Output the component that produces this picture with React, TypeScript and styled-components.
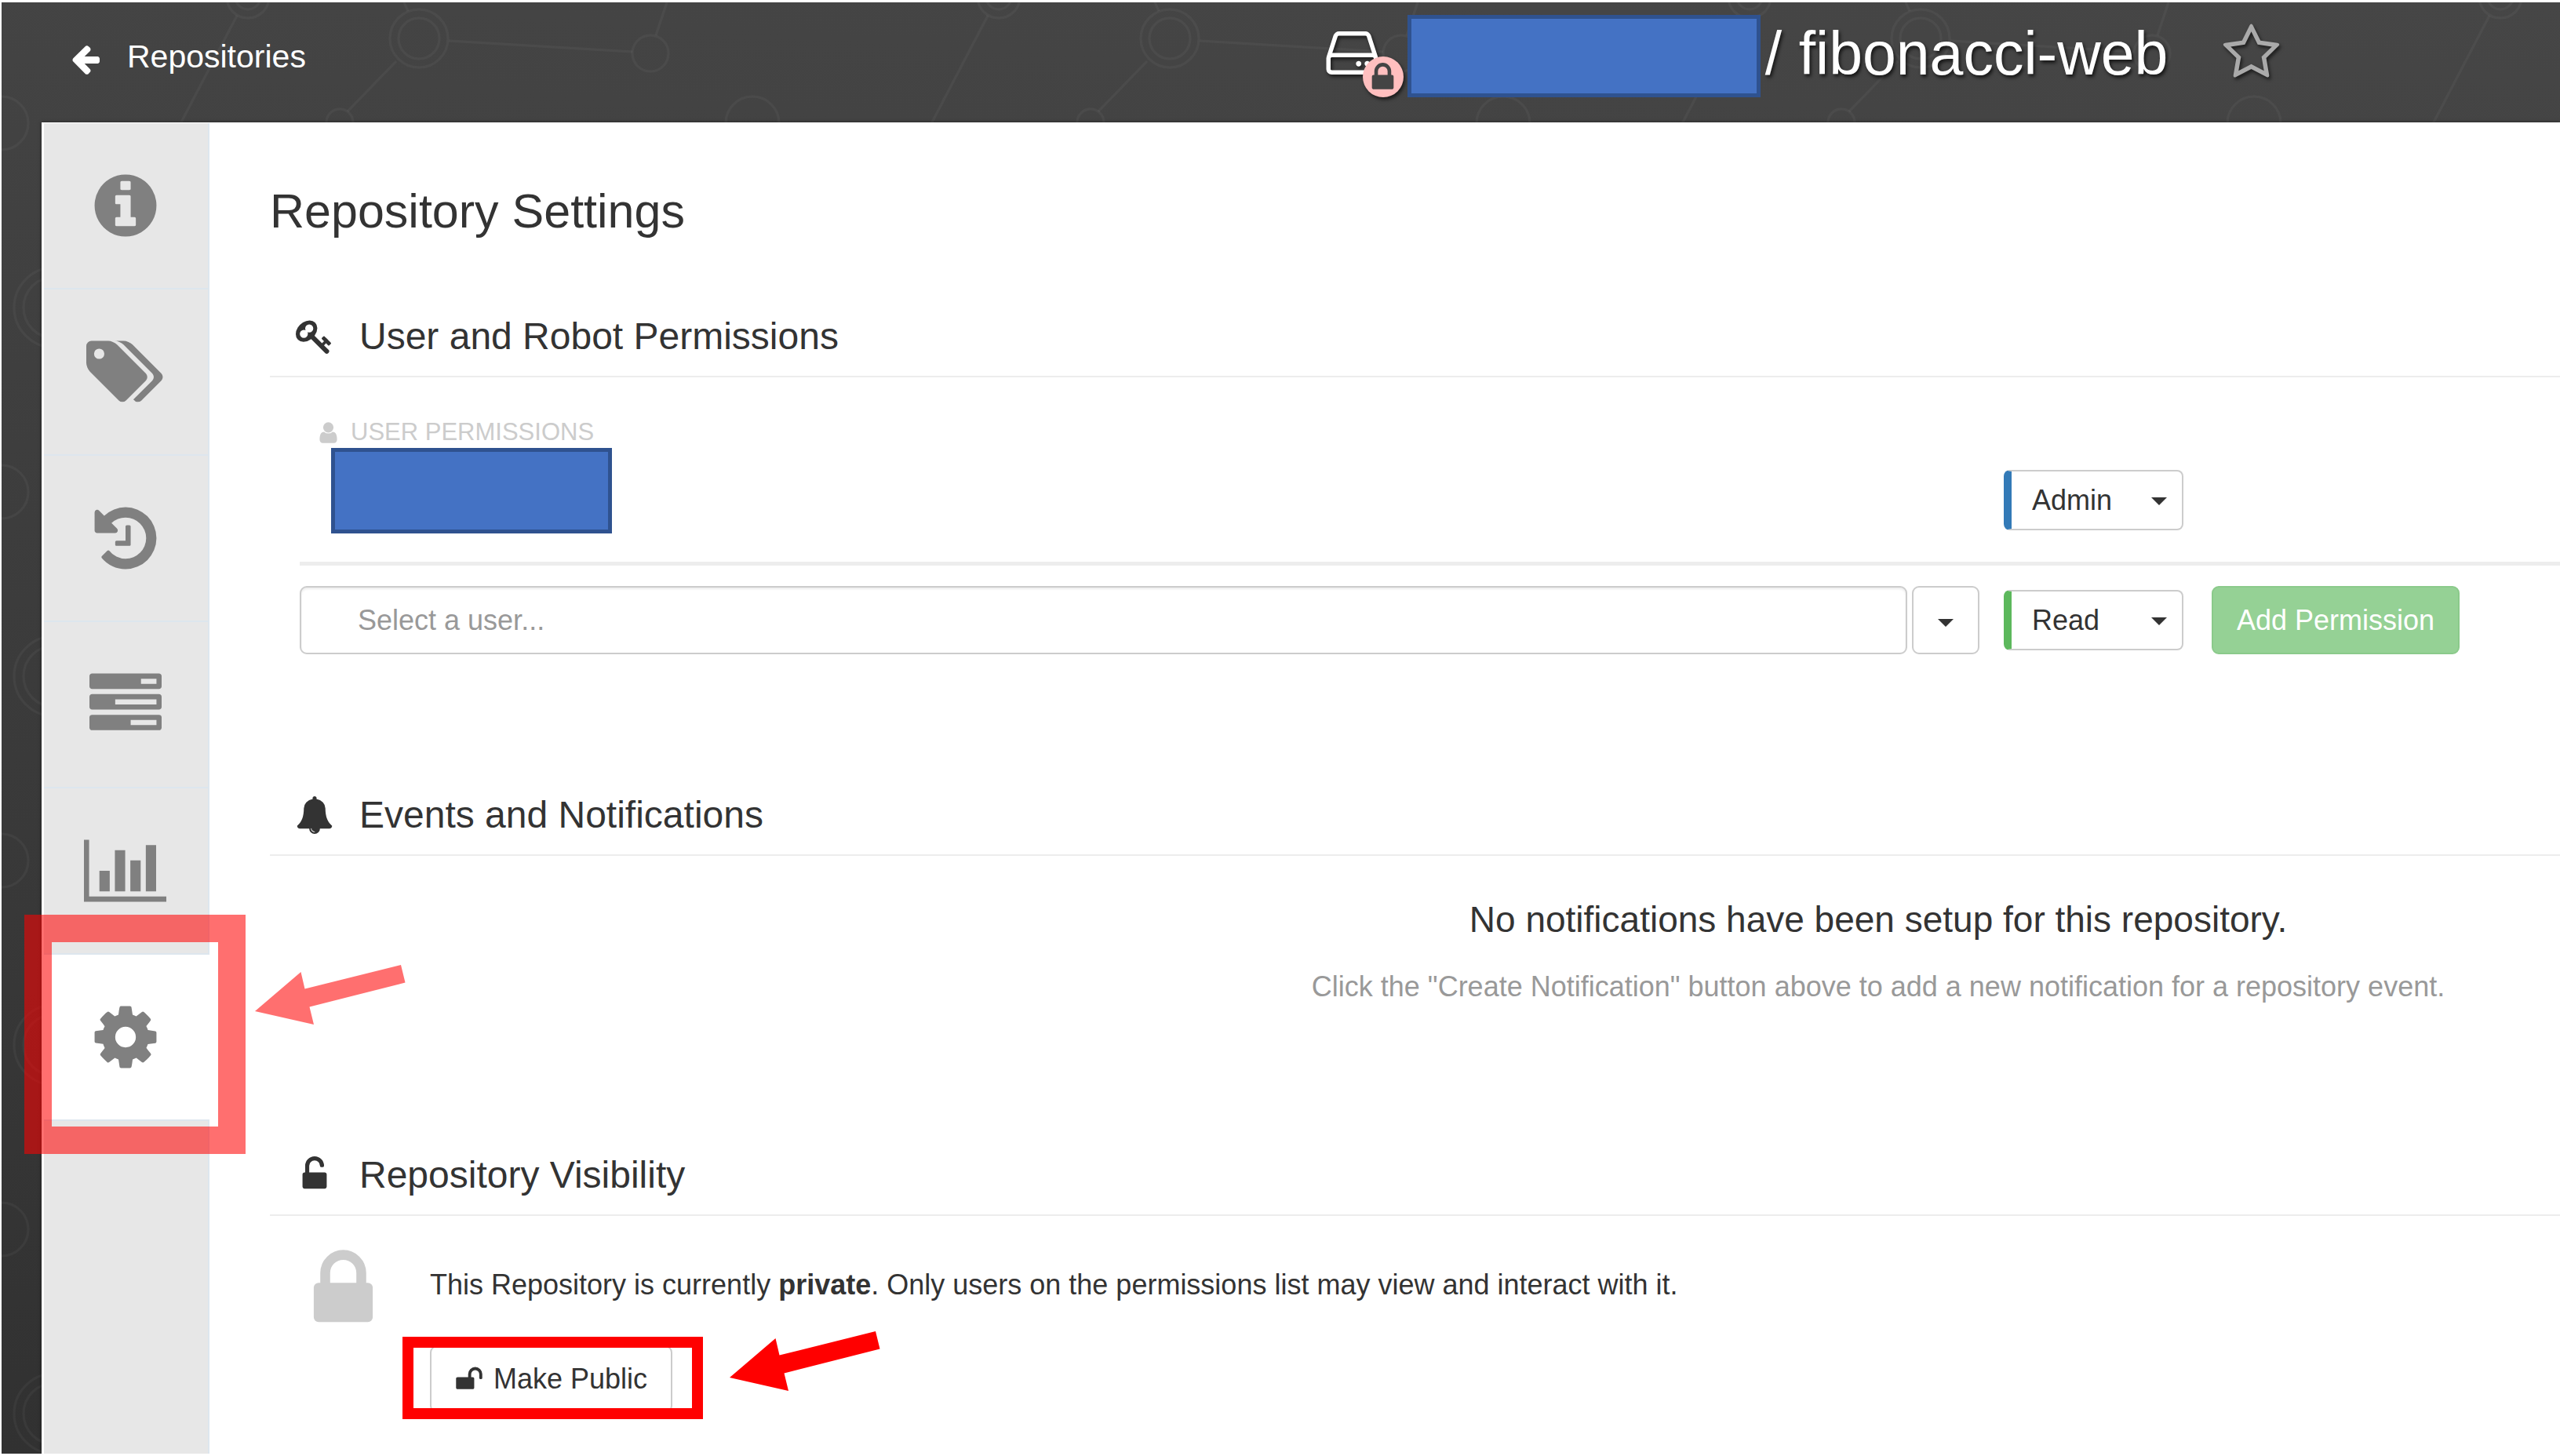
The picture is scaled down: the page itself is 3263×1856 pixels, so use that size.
import React from 'react';
import styled, { createGlobalStyle } from 'styled-components';

const GlobalStyle = createGlobalStyle`
  *, *::before, *::after { box-sizing: border-box; }
  body {
    margin: 0;
    background: #fff;
    color: #333;
    font-family: "Liberation Sans", Arial, Helvetica, sans-serif;
    font-size: 36px;
    line-height: 42px;
    overflow-x: hidden;
  }
  h1, h2, h3, p { margin: 0; font-weight: 400; }
  a { color: inherit; text-decoration: none; }
  button, input, select { font: inherit; color: inherit; margin: 0; }
`;

/* ---------- icons ---------- */

const ICONS = {
  info: 'M1152 1376v-160q0-14-9-23t-23-9h-96v-512q0-14-9-23t-23-9h-320q-14 0-23 9t-9 23v160q0 14 9 23t23 9h96v320h-96q-14 0-23 9t-9 23v160q0 14 9 23t23 9h448q14 0 23-9t9-23zm-128-896v-160q0-14-9-23t-23-9h-192q-14 0-23 9t-9 23v160q0 14 9 23t23 9h192q14 0 23-9t9-23zm640 416q0 209-103 385.5t-279.5 279.5-385.5 103-385.5-103-279.5-279.5-103-385.5 103-385.5 279.5-279.5 385.5-103 385.5 103 279.5 279.5 103 385.5z',
  tags: 'M384 448q0-53-37.5-90.5t-90.5-37.5-90.5 37.5-37.5 90.5 37.5 90.5 90.5 37.5 90.5-37.5 37.5-90.5zm1067 576q0 53-37 90l-491 492q-39 37-91 37-53 0-90-37l-715-716q-38-37-64.5-101t-26.5-117v-416q0-52 38-90t90-38h416q53 0 117 26.5t102 64.5l715 714q37 39 37 91zm384 0q0 53-37 90l-491 492q-39 37-91 37-36 0-59-14t-53-45l470-470q37-37 37-90 0-52-37-91l-715-714q-38-38-102-64.5t-117-26.5h224q53 0 117 26.5t102 64.5l715 714q37 39 37 91z',
  history: 'M1664 896q0 156-61 298t-164 245-245 164-298 61q-172 0-327-72.5t-264-204.5q-7-10-6.5-22.5t8.5-20.5l137-138q10-9 25-9 16 2 23 12 73 95 179 147t225 52q104 0 198.5-40.5t163.5-109.5 109.5-163.5 40.5-198.5-40.5-198.5-109.5-163.5-163.5-109.5-198.5-40.5q-98 0-188 35.5t-160 101.5l137 138q31 30 14 69-17 40-59 40h-448q-26 0-45-19t-19-45v-448q0-42 40-59 39-17 69 14l130 129q107-101 244.5-156.5t284.5-55.5q156 0 298 61t245 164 164 245 61 298zm-640-288v448q0 14-9 23t-23 9h-320q-14 0-23-9t-9-23v-64q0-14 9-23t23-9h224v-352q0-14 9-23t23-9h64q14 0 23 9t9 23z',
  tasks: 'M1024 1408h640v-128h-640v128zm-384-512h1024v-128h-1024v128zm640-512h384v-128h-384v128zm512 832v256q0 26-19 45t-45 19h-1664q-26 0-45-19t-19-45v-256q0-26 19-45t45-19h1664q26 0 45 19t19 45zm0-512v256q0 26-19 45t-45 19h-1664q-26 0-45-19t-19-45v-256q0-26 19-45t45-19h1664q26 0 45 19t19 45zm0-512v256q0 26-19 45t-45 19h-1664q-26 0-45-19t-19-45v-256q0-26 19-45t45-19h1664q26 0 45 19t19 45z',
  chart: 'M640 896v512h-256v-512h256zm384-512v1024h-256v-1024h256zm1024 1152v128h-2048v-1536h128v1408h1920zm-640-896v768h-256v-768h256zm384-384v1152h-256v-1152h256z',
  cog: 'M1152 896q0-106-75-181t-181-75-181 75-75 181 75 181 181 75 181-75 75-181zm512-109v222q0 12-8 23t-20 13l-185 28q-19 54-39 91 35 50 107 138 10 12 10 25t-9 23q-27 37-99 108t-94 71q-12 0-26-9l-138-108q-44 23-91 38-16 136-29 186-7 28-36 28h-222q-14 0-24.5-8.5t-11.5-21.5l-28-184q-49-16-90-37l-141 107q-10 9-25 9-14 0-25-11-126-114-165-168-7-10-7-23 0-12 8-23 15-21 51-66.5t54-70.5q-27-50-41-99l-183-27q-13-2-21-12.5t-8-23.5v-222q0-12 8-23t19-13l186-28q14-46 39-92-40-57-107-138-10-12-10-24 0-10 9-23 26-36 98.5-107.5t94.5-71.5q13 0 26 10l138 107q44-23 91-38 16-136 29-186 7-28 36-28h222q14 0 24.5 8.5t11.5 21.5l28 184q49 16 90 37l142-107q9-9 24-9 13 0 25 10 129 119 165 170 7 8 7 22 0 12-8 23-15 21-51 66.5t-54 70.5q26 50 41 98l183 28q13 2 21 12.5t8 23.5z',
  key: 'M832 512q0-80-56-136t-136-56-136 56-56 136q0 42 19 83-41-19-83-19-80 0-136 56t-56 136 56 136 136 56 136-56 56-136q0-42-19-83 41 19 83 19 80 0 136-56t56-136zm851 704q0 17-49 66t-66 49q-9 0-28.5-16t-36.5-33-38.5-40-24.5-26l-96 96 220 220q28 28 28 68 0 42-39 81t-81 39q-40 0-68-28l-671-671q-176 131-365 131-163 0-265.5-102.5t-102.5-265.5q0-160 95-313t248-248 313-95q163 0 265.5 102.5t102.5 265.5q0 189-131 365l355 355 96-96q-3-3-26-24.5t-40-38.5-33-36.5-16-28.5q0-17 49-66t66-49q13 0 23 10 6 6 46 44.5t82 79.5 86.5 86 73 78 28.5 41z',
  bell: 'M912 1696q0-16-16-16-59 0-101.5-42.5t-42.5-101.5q0-16-16-16t-16 16q0 73 51.5 124.5t124.5 51.5q16 0 16-16zm816-288q0 52-38 90t-90 38h-448q0 106-75 181t-181 75-181-75-75-181h-448q-52 0-90-38t-38-90q50-42 91-88t85-119.5 74.5-158.5 50-206 19.5-260q0-152 117-282.5t307-158.5q-8-19-8-39 0-40 28-68t68-28 68 28 28 68q0 20-8 39 190 28 307 158.5t117 282.5q0 139 19.5 260t50 206 74.5 158.5 85 119.5 91 88z',
  unlockAlt: 'M1376 768q40 0 68 28t28 68v576q0 40-28 68t-68 28h-960q-40 0-68-28t-28-68v-576q0-40 28-68t68-28h32v-320q0-185 131.5-316.5t316.5-131.5 316.5 131.5 131.5 316.5q0 26-19 45t-45 19h-64q-26 0-45-19t-19-45q0-106-75-181t-181-75-181 75-75 181v320h736z',
  unlock: 'M1728 576v256q0 26-19 45t-45 19h-64q-26 0-45-19t-19-45v-256q0-106-75-181t-181-75-181 75-75 181v192h96q40 0 68 28t28 68v576q0 40-28 68t-68 28h-960q-40 0-68-28t-28-68v-576q0-40 28-68t68-28h672v-192q0-185 131.5-316.5t316.5-131.5 316.5 131.5 131.5 316.5z',
  lock: 'M640 768h512v-192q0-106-75-181t-181-75-181 75-75 181v192zm832 96v576q0 40-28 68t-68 28h-960q-40 0-68-28t-28-68v-576q0-40 28-68t68-28h32v-192q0-184 132-316t316-132 316 132 132 316v192h32q40 0 68 28t28 68z',
  user: 'M1536 1399q0 109-62.5 187t-150.5 78h-854q-88 0-150.5-78t-62.5-187q0-85 8.5-160.5t31.5-152 58.5-131 94-89 134.5-34.5q131 128 313 128t313-128q76 0 134.5 34.5t94 89 58.5 131 31.5 152 8.5 160.5zm-256-887q0 159-112.5 271.5t-271.5 112.5-271.5-112.5-112.5-271.5 112.5-271.5 271.5-112.5 271.5 112.5 112.5 271.5z',
  drive: 'M1168 1216q0 33-23.5 56.5t-56.5 23.5-56.5-23.5-23.5-56.5 23.5-56.5 56.5-23.5 56.5 23.5 23.5 56.5zm256 0q0 33-23.5 56.5t-56.5 23.5-56.5-23.5-23.5-56.5 23.5-56.5 56.5-23.5 56.5 23.5 23.5 56.5zm112 160v-320q0-13-9.5-22.5t-22.5-9.5h-1216q-13 0-22.5 9.5t-9.5 22.5v320q0 13 9.5 22.5t22.5 9.5h1216q13 0 22.5-9.5t9.5-22.5zm-1230-480h1180l-157-482q-4-13-16-21.5t-26-8.5h-782q-14 0-26 8.5t-16 21.5zm1358 160v320q0 66-47 113t-113 47h-1216q-66 0-113-47t-47-113v-320q0-25 16-75l197-606q17-53 63-86t101-33h782q55 0 101 33t63 86l197 606q16 50 16 75z',
  star: 'M1201 1004l306-297-422-62-189-382-189 382-422 62 306 297-73 421 378-199 377 199zm527-357q0 22-26 48l-363 354 86 500q1 7 1 20 0 50-41 50-19 0-40-12l-449-236-449 236q-22 12-40 12-21 0-31.5-14.5t-10.5-35.5q0-6 2-20l86-500-364-354q-25-27-25-48 0-37 56-46l502-73 225-455q19-41 49-41t49 41l225 455 502 73q56 9 56 46z',
  arrowLeft: 'M1664 896v128q0 53-32.5 90.5t-84.5 37.5h-704l293 294q38 36 38 90t-38 90l-75 76q-37 37-90 37-52 0-91-37l-651-652q-37-37-37-90 0-52 37-91l651-650q38-38 91-38 52 0 90 38l75 74q38 38 38 91t-38 91l-293 293h704q52 0 84.5 37.5t32.5 90.5z',
};

type IconName = keyof typeof ICONS;

const VIEWBOX: Partial<Record<IconName, string>> = {
  tags: '-64 0 1920 1792',
  chart: '0 0 2048 1792',
};

const Svg = styled.svg<{ $size: number }>`
  display: block;
  flex: none;
  height: ${(p) => p.$size}px;
  fill: currentColor;
`;

function Icon({ name, size }: { name: IconName; size: number }) {
  return (
    <Svg $size={size} viewBox={VIEWBOX[name] ?? '0 0 1792 1792'} aria-hidden="true">
      <path d={ICONS[name]} />
    </Svg>
  );
}

/* ---------- page shell ---------- */

const Page = styled.div`
  position: relative;
  isolation: isolate;
  display: flex;
  flex-direction: column;
  min-height: calc(100vh - 6px);
  margin: 3px 0 3px 2px;
  background: linear-gradient(184deg, #464646, #313131);
  overflow: hidden;
`;

const Backdrop = styled.svg`
  position: absolute;
  inset: 0;
  z-index: -1;
  width: 100%;
  height: 100%;
`;

function NetworkBackdrop() {
  return (
    <Backdrop aria-hidden="true">
      <defs>
        <pattern id="net" width="957" height="470" patternUnits="userSpaceOnUse">
          <g fill="none" stroke="#fff" strokeOpacity="0.04" strokeWidth="3">
            <circle cx="532" cy="46" r="37" />
            <circle cx="532" cy="46" r="26" />
            <circle cx="314" cy="-7" r="27" />
            <circle cx="314" cy="-7" r="16" />
            <circle cx="314" cy="463" r="27" />
            <circle cx="314" cy="463" r="16" />
            <circle cx="827" cy="65" r="23" />
            <circle cx="431" cy="153" r="17" />
            <circle cx="0" cy="154" r="34" />
            <circle cx="957" cy="154" r="34" />
            <circle cx="67" cy="389" r="51" />
            <circle cx="67" cy="389" r="39" />
            <path d="M300 17L220 170M513 0L518 11M503 75L441 139M570 49L804 63M848 0L834 42" />
          </g>
        </pattern>
      </defs>
      <rect width="100%" height="100%" fill="url(#net)" />
    </Backdrop>
  );
}

const Header = styled.header`
  display: grid;
  grid-template-columns: minmax(0, 1685fr) auto minmax(0, 355fr);
  align-items: center;
  height: 153px;
  color: #fff;
`;

const BackLink = styled.a`
  display: flex;
  align-items: flex-end;
  gap: 32px;
  justify-self: start;
  margin: 0 0 16px 86px;
  font-size: 41px;
  line-height: 48px;
`;

const RepoTitle = styled.h1`
  display: flex;
  align-items: center;
  margin-bottom: 16px;
  font-size: 77px;
  line-height: 86px;
  white-space: nowrap;
  text-shadow: 2px 3px 4px rgba(0, 0, 0, 0.7);
`;

const DriveMark = styled.span`
  position: relative;
  margin: 0 32px 8px 0;
  filter: drop-shadow(2px 3px 2px rgba(0, 0, 0, 0.6));
`;

const PrivateBadge = styled.span`
  position: absolute;
  left: 52px;
  top: 43px;
  display: grid;
  place-items: center;
  width: 52px;
  height: 52px;
  border-radius: 50%;
  background: #ffbfbf;
  color: #444;
`;

const Redaction = styled.span<{ $w: number; $h: number }>`
  display: block;
  width: ${(p) => p.$w}px;
  height: ${(p) => p.$h}px;
  border: 5px solid #2f528f;
  background: #4472c4;
`;

const RepoName = styled.span`
  margin: 0 68px 8px 6px;
`;

const StarButton = styled.button`
  margin-bottom: 8px;
  padding: 0;
  border: 0;
  background: none;
  color: #aaa;
  filter: drop-shadow(2px 3px 2px rgba(0, 0, 0, 0.6));
`;

const Panel = styled.div`
  display: flex;
  flex: 1;
  margin-left: 51px;
  padding-left: 3px;
  background: #fff;
  box-shadow: 0 0 4px rgba(0, 0, 0, 0.6);
`;

/* ---------- side navigation ---------- */

const SideNav = styled.nav`
  flex: none;
  width: 211px;
  margin-top: 1px;
  border-right: 2px solid #dde6ee;
  background: #e7e7e7;
`;

const NavItem = styled.a<{ $active?: boolean }>`
  position: relative;
  display: flex;
  align-items: center;
  justify-content: center;
  height: 212px;
  margin-right: ${(p) => (p.$active ? '-2px' : '0')};
  padding-right: ${(p) => (p.$active ? '4px' : '2px')};
  border-bottom: 2px solid #dde6ee;
  background: ${(p) => (p.$active ? '#fff' : 'transparent')};
  color: #808080;
`;

const NavFrame = styled.span`
  position: absolute;
  left: -25px;
  top: -51px;
  width: 282px;
  height: 305px;
  border: 35px solid rgba(255, 0, 0, 0.565);
`;

const Pointer = styled.svg<{ $x: number; $y: number }>`
  position: absolute;
  left: ${(p) => p.$x}px;
  top: ${(p) => p.$y}px;
  width: 192px;
  height: 76px;
  overflow: visible;
  z-index: 1;
`;

function RedArrow({ x, y, opacity = 1 }: { x: number; y: number; opacity?: number }) {
  return (
    <Pointer $x={x} $y={y} viewBox="0 0 192 76" aria-hidden="true">
      <path d="M0 59L58.5 9L63.5 30.5L186 0L191.5 22.5L69.5 53.5L75 76Z" fill="#f00" fillOpacity={opacity} />
    </Pointer>
  );
}

/* ---------- content ---------- */

const Content = styled.main`
  flex: 1;
  min-width: 0;
  padding: 79px 0 0 77px;
`;

const PageTitle = styled.h2`
  margin-bottom: 99px;
  font-size: 61px;
  line-height: 68px;
`;

const SectionHead = styled.h3`
  display: flex;
  align-items: center;
  padding-bottom: 23px;
  border-bottom: 2px solid #ededed;
  font-size: 48px;
  line-height: 54px;
`;

const SectionIcon = styled.span`
  display: flex;
  justify-content: center;
  width: 114px;
`;

const Permissions = styled.div`
  padding: 52px 0 178px 38px;
`;

const GroupLabel = styled.div`
  display: flex;
  align-items: center;
  gap: 13px;
  padding-left: 21px;
  color: #ccc;
  font-size: 31px;
  line-height: 36px;
  text-transform: uppercase;
`;

const PermissionRow = styled.div`
  display: grid;
  grid-template-columns: minmax(0, 1fr) 229px 316px;
  column-gap: 36px;
  align-items: center;
  padding-right: 128px;
`;

const ExistingRow = styled(PermissionRow)`
  align-items: end;
  padding-top: 2px;
  padding-bottom: 36px;
  border-bottom: 5px solid #ededed;
`;

const NewRow = styled(PermissionRow)`
  padding-top: 26px;
`;

const Entity = styled.div`
  padding-left: 40px;
`;

const UserPicker = styled.div`
  display: flex;
  gap: 6px;
  margin-right: -5px;
`;

const UserInput = styled.input`
  flex: 1;
  min-width: 0;
  height: 87px;
  padding: 0 72px;
  border: 2px solid #ccc;
  border-radius: 9px;
  background: #fff;
  box-shadow: inset 0 2px 3px rgba(0, 0, 0, 0.08);
  &::placeholder { color: #999; opacity: 1; }
`;

const Caret = styled.span`
  width: 0;
  height: 0;
  border: 10px solid transparent;
  border-top-color: #333;
  border-bottom: 0;
`;

const DropButton = styled.button`
  display: grid;
  place-items: center;
  width: 86px;
  padding: 6px 0 0;
  border: 2px solid #ccc;
  border-radius: 9px;
  background: #fff;
`;

const RoleBox = styled.div<{ $color: string; $lift?: boolean }>`
  position: relative;
  margin-bottom: ${(p) => (p.$lift ? '4px' : '0')};
  select {
    appearance: none;
    display: block;
    width: 100%;
    height: 77px;
    padding: 0 60px 0 26px;
    border: 2px solid #ccc;
    border-left: 10px solid ${(p) => p.$color};
    border-radius: 8px;
    background: #fff;
  }
  ${Caret} {
    position: absolute;
    right: 21px;
    top: 35px;
    pointer-events: none;
  }
`;

function RoleSelect({ role, color, label, lift }: { role: string; color: string; label: string; lift?: boolean }) {
  return (
    <RoleBox $color={color} $lift={lift}>
      <select aria-label={label} defaultValue={role}>
        <option>Read</option>
        <option>Write</option>
        <option>Admin</option>
      </select>
      <Caret />
    </RoleBox>
  );
}

const AddButton = styled.button`
  height: 87px;
  padding: 0;
  border: 2px solid #8bca8b;
  border-radius: 9px;
  background: #95d195;
  color: #fff;
`;

const EmptyState = styled.div`
  padding: 55px 0 192px 1181px;
  text-align: center;
  white-space: nowrap;
`;

const EmptyTitle = styled.p`
  margin-bottom: 39px;
  font-size: 46px;
  line-height: 52px;
`;

const EmptyHint = styled.p`
  color: #999;
`;

const Visibility = styled.div`
  display: flex;
  align-items: flex-start;
  gap: 52px;
  padding: 35px 0 0 35px;
`;

const BigLock = styled.span`
  color: #ccc;
`;

const VisibilityText = styled.div`
  display: flex;
  flex-direction: column;
  align-items: flex-start;
  gap: 56px;
  padding-top: 32px;
`;

const PublicButton = styled.button`
  position: relative;
  display: flex;
  align-items: center;
  justify-content: center;
  gap: 13px;
  width: 309px;
  height: 86px;
  padding: 0;
  border: 2px solid #ccc;
  border-radius: 9px;
  background: #fff;
`;

const ButtonFrame = styled.span`
  position: absolute;
  left: -37px;
  top: -13px;
  width: 383px;
  height: 105px;
  border: 14px solid #f00;
`;

const NAV: { icon: IconName; label: string }[] = [
  { icon: 'info', label: 'Information' },
  { icon: 'tags', label: 'Tags' },
  { icon: 'history', label: 'Tag History' },
  { icon: 'tasks', label: 'Builds' },
  { icon: 'chart', label: 'Usage Logs' },
  { icon: 'cog', label: 'Settings' },
];

export default function App() {
  return (
    <>
      <GlobalStyle />
      <Page>
        <NetworkBackdrop />
        <Header>
          <BackLink href="#repositories">
            <Icon name="arrowLeft" size={42} />
            Repositories
          </BackLink>
          <RepoTitle>
            <DriveMark>
              <Icon name="drive" size={77} />
              <PrivateBadge>
                <Icon name="lock" size={43} />
              </PrivateBadge>
            </DriveMark>
            <Redaction $w={450} $h={105} />
            <RepoName>/ fibonacci-web</RepoName>
            <StarButton aria-label="Star repository">
              <Icon name="star" size={77} />
            </StarButton>
          </RepoTitle>
        </Header>

        <Panel>
          <SideNav>
            {NAV.map(({ icon, label }) => {
              const active = icon === 'cog';
              return (
                <NavItem key={icon} href={`#${icon}`} aria-label={label} $active={active}>
                  <Icon name={icon} size={92} />
                  {active && (
                    <>
                      <NavFrame />
                      <RedArrow x={269} y={13} opacity={0.565} />
                    </>
                  )}
                </NavItem>
              );
            })}
          </SideNav>

          <Content>
            <PageTitle>Repository Settings</PageTitle>

            <section>
              <SectionHead>
                <SectionIcon><Icon name="key" size={48} /></SectionIcon>
                User and Robot Permissions
              </SectionHead>
              <Permissions>
                <GroupLabel>
                  <Icon name="user" size={31} />
                  User Permissions
                </GroupLabel>
                <ExistingRow>
                  <Entity><Redaction $w={358} $h={109} /></Entity>
                  <RoleSelect role="Admin" color="#337ab7" label="Permission of user" lift />
                </ExistingRow>
                <NewRow>
                  <UserPicker>
                    <UserInput type="text" placeholder="Select a user..." aria-label="Select a user" />
                    <DropButton aria-label="Show users"><Caret /></DropButton>
                  </UserPicker>
                  <RoleSelect role="Read" color="#5cb85c" label="New permission" />
                  <AddButton>Add Permission</AddButton>
                </NewRow>
              </Permissions>
            </section>

            <section>
              <SectionHead>
                <SectionIcon><Icon name="bell" size={48} /></SectionIcon>
                Events and Notifications
              </SectionHead>
              <EmptyState>
                <EmptyTitle>No notifications have been setup for this repository.</EmptyTitle>
                <EmptyHint>
                  Click the "Create Notification" button above to add a new notification for a repository event.
                </EmptyHint>
              </EmptyState>
            </section>

            <section>
              <SectionHead>
                <SectionIcon><Icon name="unlockAlt" size={48} /></SectionIcon>
                Repository Visibility
              </SectionHead>
              <Visibility>
                <BigLock><Icon name="lock" size={117} /></BigLock>
                <VisibilityText>
                  <p>
                    This Repository is currently <b>private</b>. Only users on the permissions list may view and
                    interact with it.
                  </p>
                  <PublicButton>
                    <Icon name="unlock" size={36} />
                    Make Public
                    <ButtonFrame />
                    <RedArrow x={380} y={-20} />
                  </PublicButton>
                </VisibilityText>
              </Visibility>
            </section>
          </Content>
        </Panel>
      </Page>
    </>
  );
}
